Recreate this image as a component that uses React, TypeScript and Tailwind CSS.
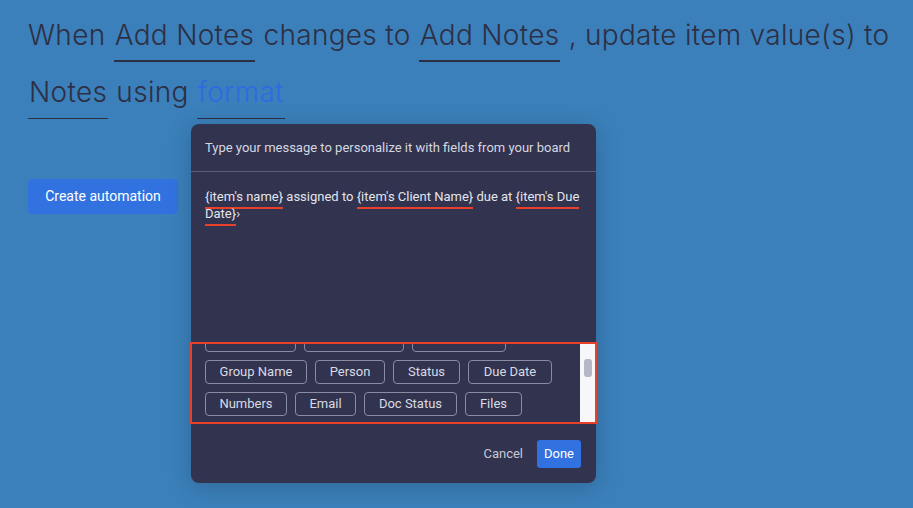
import React from "react";

const headFont = { fontFamily: "Inter, 'Noto Sans', sans-serif" };
const uiFont = { fontFamily: "Roboto, 'Noto Sans', sans-serif" };

function Field({ children, thin }: { children: React.ReactNode; thin?: boolean }) {
  return (
    <span
      className={
        "inline-block leading-[34px] px-[1px] border-[#2c2f44] " +
        (thin ? "border-b pb-[9px]" : "border-b-2 pb-[8px]")
      }
    >
      {children}
    </span>
  );
}

function Token({ children }: { children: React.ReactNode }) {
  return <span className="border-b-2 border-[#e8402a] pb-[3px]">{children}</span>;
}

function Chip({ label, w }: { label?: string; w: string }) {
  return (
    <div
      className={
        "h-[24px] shrink-0 whitespace-nowrap rounded-[4px] border border-[#8a8ca3] text-[#d9dae3] text-[13px] flex items-center justify-center " +
        w
      }
    >
      {label}
    </div>
  );
}

export default function App() {
  return (
    <div className="w-[913px] h-[508px] bg-[#3b80bb] relative overflow-hidden">
      <div
        className="pl-[28px] pr-[12px] pt-[7px] text-[28px] font-light tracking-[0.3px] text-[#2d2f44] leading-[57px]"
        style={headFont}
      >
        When <Field>Add Notes</Field> changes to <Field>Add Notes</Field> , update item value(s) to{" "}
        <Field thin>Notes</Field> using{" "}
        <Field thin>
          <span className="text-[#2f6ae0]">format</span>
        </Field>
      </div>

      <div className="pl-[28px] pt-[58px]" style={uiFont}>
        <button className="w-[150px] h-[35px] rounded-[4px] bg-[#3272e0] text-white text-[14px]">
          Create automation
        </button>
      </div>

      {/* personalize dialog */}
      <div
        className="absolute left-[191px] top-[124px] w-[405px] rounded-[8px] bg-[#31334f] shadow-[0_4px_24px_rgba(0,0,0,0.2)] flex flex-col"
        style={uiFont}
      >
        <div className="h-[48px] px-[14px] flex items-center border-b border-[#5b5d78] text-[13px] text-[#d6d7e0]">
          Type your message to personalize it with fields from your board
        </div>
        <div className="h-[170px] px-[14px] pt-[16px] text-[13px] leading-[17px] text-[#e4e5ec]">
          <Token>{"{item's name}"}</Token> assigned to <Token>{"{item's Client Name}"}</Token> due at{" "}
          <Token>{"{item's Due Date}"}</Token>›
        </div>
        <div className="h-[82px] -mx-px border-2 border-[#e8402a] flex overflow-hidden">
          <div className="flex-1 overflow-hidden pl-[13px]">
            <div className="-mt-[16px] flex flex-col gap-[8px]">
              {/* row scrolled above the visible area */}
              <div className="flex gap-[8px]">
                <Chip w="w-[91px]" />
                <Chip w="w-[100px]" />
                <Chip w="w-[94px]" />
              </div>
              <div className="flex gap-[8px]">
                <Chip label="Group Name" w="w-[102px]" />
                <Chip label="Person" w="w-[70px]" />
                <Chip label="Status" w="w-[67px]" />
                <Chip label="Due Date" w="w-[84px]" />
              </div>
              <div className="flex gap-[8px]">
                <Chip label="Numbers" w="w-[82px]" />
                <Chip label="Email" w="w-[61px]" />
                <Chip label="Doc Status" w="w-[93px]" />
                <Chip label="Files" w="w-[57px]" />
              </div>
            </div>
          </div>
          <div className="w-[15px] bg-[#f7f7fa] pt-[15px] flex justify-center">
            <div className="w-[8px] h-[18px] rounded-[3px] bg-[#b4b7c6]" />
          </div>
        </div>
        <div className="h-[59px] flex items-center justify-end pr-[15px] gap-[14px]">
          <span className="text-[13px] text-[#c8c9d4]">Cancel</span>
          <button className="w-[44px] h-[28px] rounded-[3px] bg-[#3272e0] text-white text-[13px]">
            Done
          </button>
        </div>
      </div>
    </div>
  );
}
